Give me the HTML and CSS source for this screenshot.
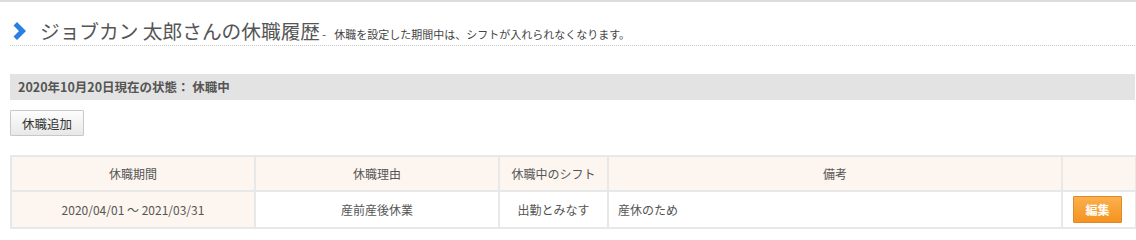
FILE: index.html
```html
<!DOCTYPE html>
<html lang="ja">
<head>
<meta charset="utf-8">
<link rel="stylesheet" href="styles.css">
</head>
<body>
<div class="page">
  <div class="title-row">
    <svg class="chev" width="14" height="18" viewBox="0 0 14 18"><path d="M0.5 3.5 L4 0 L13 9 L4 18 L0.5 14.5 L6 9 Z" fill="#2a7fe3"/></svg>
    <h1 class="title">ジョブカン 太郎さんの休職履歴</h1>
    <span class="dash">-</span>
    <span class="note">休職を設定した期間中は、シフトが入れられなくなります。</span>
  </div>
  <div class="status">2020年10月20日現在の状態：&nbsp;休職中</div>
  <button class="btn-add">休職追加</button>
  <table class="list">
    <colgroup>
      <col class="c1"><col class="c2"><col class="c3"><col class="c4"><col class="c5">
    </colgroup>
    <thead>
      <tr><th>休職期間</th><th>休職理由</th><th>休職中のシフト</th><th>備考</th><th></th></tr>
    </thead>
    <tbody>
      <tr>
        <td class="period">2020/04/01 ～ 2021/03/31</td>
        <td class="center">産前産後休業</td>
        <td class="center">出勤とみなす</td>
        <td class="memo">産休のため</td>
        <td class="center"><button class="btn-edit">編集</button></td>
      </tr>
    </tbody>
  </table>
</div>
</body>
</html>
```
FILE: styles.css
```css
html, body {
  margin: 0;
  padding: 0;
  background: #fff;
}
body {
  font-family: "Noto Sans CJK JP", "Noto Sans", sans-serif;
  color: #555;
  border-top: 2px solid #dcdcdc;
}
.page {
  padding: 0 1px 0 10px;
}
.title-row {
  display: flex;
  align-items: baseline;
  padding-top: 15px;
  border-bottom: 1px dotted #c8c8c8;
  height: 28px;
}
.chev {
  align-self: center;
  margin: 0 13px 0 3px;
}
.title {
  margin: 0;
  font-size: 19.7px;
  font-weight: normal;
  line-height: 28px;
  color: #555;
}
.dash {
  font-size: 12px;
  margin: 0 8px 0 2px;
}
.note {
  font-size: 11px;
  color: #444;
}
.status {
  margin-top: 28px;
  height: 26px;
  line-height: 26px;
  background: #e3e3e3;
  padding-left: 8px;
  font-size: 12.5px;
  font-weight: bold;
  color: #555;
}
.btn-add {
  display: block;
  margin-top: 10px;
  width: 74px;
  height: 26px;
  padding: 0;
  font-family: inherit;
  font-size: 12.5px;
  color: #333;
  border: 1px solid #c8c8c8;
  border-radius: 1px;
  background: linear-gradient(#fdfdfd, #e8e8e8);
}
.list {
  margin-top: 19px;
  width: 100%;
  border-collapse: collapse;
  table-layout: fixed;
  font-size: 12px;
}
.c1 { width: 244px; }
.c2 { width: 244px; }
.c3 { width: 109px; }
.c4 { width: 454px; }
.c5 { width: 74px; }
.list th, .list td {
  border: 2px solid #e8e8e8;
  padding: 0;
  font-weight: normal;
  color: #555;
}
.list th {
  height: 33px;
  background: #fdf5ef;
}
.list td {
  height: 35px;
}
.list td.period {
  background: #fdf5ef;
  text-align: center;
}
.list td.center {
  text-align: center;
}
.list td.memo {
  padding-left: 9px;
}
.btn-edit {
  width: 49px;
  height: 27px;
  padding: 0;
  margin-right: 3px;
  font-family: inherit;
  font-size: 12px;
  font-weight: bold;
  color: #fff;
  border: 1px solid #e0892c;
  border-radius: 1px;
  background: linear-gradient(#fbb04e, #f5931f);
  vertical-align: middle;
}
```
